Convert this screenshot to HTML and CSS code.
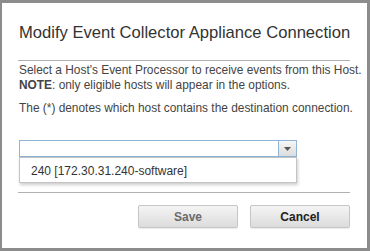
FILE: index.html
```html
<!DOCTYPE html>
<html lang="en">
<head>
  <meta charset="UTF-8" />
  <title>Modify Event Collector Appliance Connection</title>
  <link rel="stylesheet" href="styles.css">
</head>
<body>
  <div class="dialog">
    <h1>Modify Event Collector Appliance Connection</h1>

    <div class="content">
      <p>Select a Host's Event Processor to receive events from this Host.<br/>
      <b>NOTE</b>: only eligible hosts will appear in the options.</p>
      <p>The (*) denotes which host contains the destination connection.</p>

      <div class="combo">
        <div class="combo-box">
          <div class="combo-input"></div>
          <div class="combo-arrow">
            <svg width="7" height="4" viewBox="0 0 7 4"><path d="M0 0h7L3.5 4z" fill="#555"/></svg>
          </div>
        </div>
        <ul class="combo-menu">
          <li>240 [172.30.31.240-software]</li>
        </ul>
      </div>
    </div>

    <div class="button-area">
      <button class="disabled">Save</button>
      <button>Cancel</button>
    </div>
  </div>
</body>
</html>
```

FILE: styles.css
```css
body {
  margin: 0;
  font-family: 'Liberation Sans', Arial, sans-serif;
  color: #333;
}

.dialog {
  width: 370px;
  height: 251px;
  box-sizing: border-box;
  border: 3px solid #8c8c8c;
  border-left-width: 2px;
  background: #fff;
  padding: 0 17px 0 16px;
}

h1 {
  margin: 20px 0 0;
  padding: 0 1px 17px;
  font-size: 16.6px;
  line-height: 20px;
  font-weight: normal;
  color: #333;
  border-bottom: 1px solid #b0b0b0;
  white-space: nowrap;
}

.content {
  padding: 0 0 35px 1px;
  border-bottom: 1px solid #b0b0b0;
}

p {
  margin: 2px 0 8px;
  font-size: 11.9px;
  line-height: 15px;
  color: #444;
  white-space: nowrap;
}

.combo {
  position: relative;
  width: 278px;
  margin-top: 24px;
}

.combo-box {
  display: flex;
  height: 15px;
  border: 1px solid #8fb4d6;
  background: #fff;
}

.combo-input {
  flex: 1;
}

.combo-arrow {
  width: 17px;
  display: flex;
  align-items: center;
  justify-content: center;
  border-left: 1px solid #8fb4d6;
  background: linear-gradient(#f6f6f6, #dcdcdc);
}

.combo-menu {
  position: absolute;
  left: 0;
  right: 0;
  top: 17px;
  margin: 0;
  padding: 0;
  list-style: none;
  background: #fff;
  border: 1px solid #c4c4c4;
  box-shadow: 1px 2px 3px rgba(0,0,0,0.2);
}

.combo-menu li {
  padding: 6px 11px 4px;
  font-size: 12px;
  line-height: 14px;
  color: #333;
}

.button-area {
  display: flex;
  justify-content: flex-end;
  gap: 12px;
  margin-top: 12px;
}

button {
  width: 100px;
  height: 23px;
  font-family: 'Liberation Sans', Arial, sans-serif;
  font-size: 12px;
  font-weight: bold;
  color: #222;
  background: linear-gradient(#f4f4f4, #dcdcdc);
  border: 1px solid #c6c6c6;
  border-radius: 2px;
  box-shadow: 0 1px 1px rgba(0,0,0,0.08);
}

button.disabled {
  color: #6a6a6a;
}
```
